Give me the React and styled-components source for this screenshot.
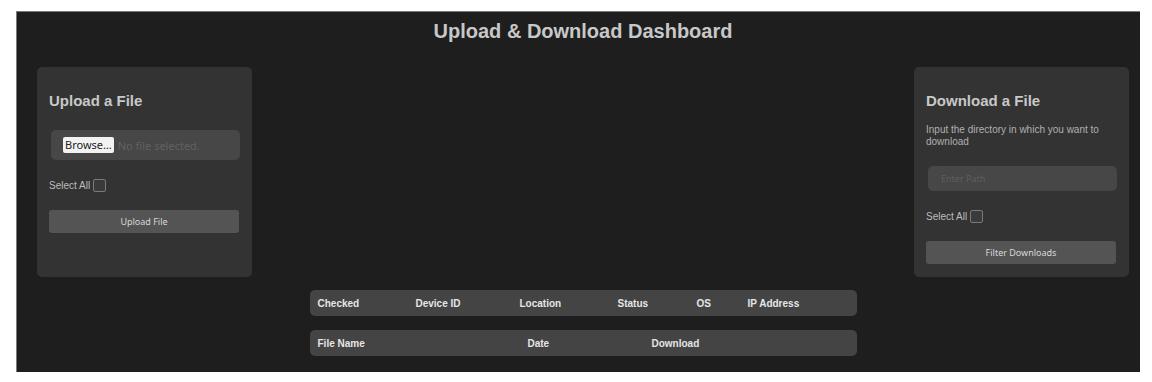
import React from 'react'
import styled, { createGlobalStyle } from 'styled-components'

const GlobalStyle = createGlobalStyle`
    body {
        margin: 11px 12px 10px 16px;
        background: #ffffff;
        font-family: "Liberation Sans", Arial, sans-serif;
    }
`

function SelectAll() {
  return (
    <CheckRow>
        Select All
        <Box />
    </CheckRow>
  )
}

function App() {
  return (
    <>
    <GlobalStyle />
    <Container>
        <Title>Upload &amp; Download Dashboard</Title>
        <Cards>
            <Card>
                <CardTitle>Upload a File</CardTitle>
                <FileBox>
                    <Browse>Browse…</Browse>
                    <NoFile>No file selected.</NoFile>
                </FileBox>
                <SelectAll />
                <ActionButton>Upload File</ActionButton>
            </Card>
            <Card>
                <CardTitle>Download a File</CardTitle>
                <Hint>Input the directory in which you want to download</Hint>
                <PathInput placeholder="Enter Path" />
                <SelectAll />
                <ActionButton>Filter Downloads</ActionButton>
            </Card>
        </Cards>
        <Tables>
            <HeadBar $cols="98px 104px 98px 79px 51px 1fr">
                <span>Checked</span>
                <span>Device ID</span>
                <span>Location</span>
                <span>Status</span>
                <span>OS</span>
                <span>IP Address</span>
            </HeadBar>
            <HeadBar $cols="210px 124px 1fr">
                <span>File Name</span>
                <span>Date</span>
                <span>Download</span>
            </HeadBar>
        </Tables>
    </Container>
    </>
  )
}

export default App

const Container = styled.div`
    background-color: #1e1e1e;
    border-top: 1px solid #7a7a7a;
    border-left: 1px solid #7a7a7a;
    height: 360px;
    padding: 0 11px 0 20px;
    display: flex;
    flex-direction: column;
`
const Title = styled.h1`
    margin: 7px 0 0;
    height: 24px;
    line-height: 24px;
    font-size: 20px;
    font-weight: 700;
    color: #c8c8c8;
    text-align: center;
`
const Cards = styled.div`
    margin-top: 24px;
    display: flex;
    justify-content: space-between;
`
const Card = styled.div`
    width: 191px;
    height: 210px;
    padding: 0 12px;
    background-color: #333333;
    border-radius: 5px;
    display: flex;
    flex-direction: column;
    align-items: flex-start;
`
const CardTitle = styled.h2`
    margin: 25px 0 0;
    height: 18px;
    line-height: 18px;
    font-size: 15px;
    font-weight: 700;
    color: #c8c8c8;
`
const FileBox = styled.div`
    margin: 20px 0 0 2px;
    width: 189px;
    height: 30px;
    background-color: #474747;
    border-radius: 5px;
    display: flex;
    align-items: center;
    padding-left: 12px;
    box-sizing: border-box;
    font-family: "Noto Sans", "Open Sans", sans-serif;
    font-size: 11px;
`
const Browse = styled.span`
    background: #f2f2f2;
    color: #222;
    border-radius: 2px;
    padding: 0 2px;
    height: 16px;
    line-height: 16px;
`
const NoFile = styled.span`
    margin-left: 4px;
    color: #616161;
`
const CheckRow = styled.div`
    margin-top: 18px;
    display: flex;
    align-items: center;
    gap: 3px;
    font-size: 10px;
    color: #bdbdbd;
    height: 14px;
`
const Box = styled.span`
    width: 11px;
    height: 11px;
    border: 1px solid #7a7a7a;
    border-radius: 2px;
    background: #3a3a3a;
`
const ActionButton = styled.div`
    margin-top: 18px;
    width: 190px;
    height: 23px;
    line-height: 23px;
    background-color: #545454;
    border-radius: 3px;
    text-align: center;
    font-family: "Noto Sans", "Open Sans", sans-serif;
    font-size: 9px;
    color: #d8d8d8;
`
const Hint = styled.p`
    margin: 14px 0 0;
    font-size: 10px;
    line-height: 12px;
    color: #b0b0b0;
    width: 185px;
`
const PathInput = styled.input`
    margin: 18px 0 0 2px;
    width: 189px;
    height: 25px;
    box-sizing: border-box;
    background-color: #474747;
    border: none;
    outline: none;
    border-radius: 5px;
    padding-left: 13px;
    font-family: "Noto Sans", "Open Sans", sans-serif;
    font-size: 9px;
    &::placeholder {
        color: #5e5e5e;
    }
`
const Tables = styled.div`
    margin: 13px auto 0;
    width: 547px;
    display: flex;
    flex-direction: column;
    gap: 14px;
`
const HeadBar = styled.div`
    height: 26px;
    background-color: #444444;
    border-radius: 5px;
    display: grid;
    grid-template-columns: ${p => p.$cols};
    align-items: center;
    padding-left: 8px;
    font-size: 10px;
    font-weight: 700;
    color: #e6e6e6;
`
